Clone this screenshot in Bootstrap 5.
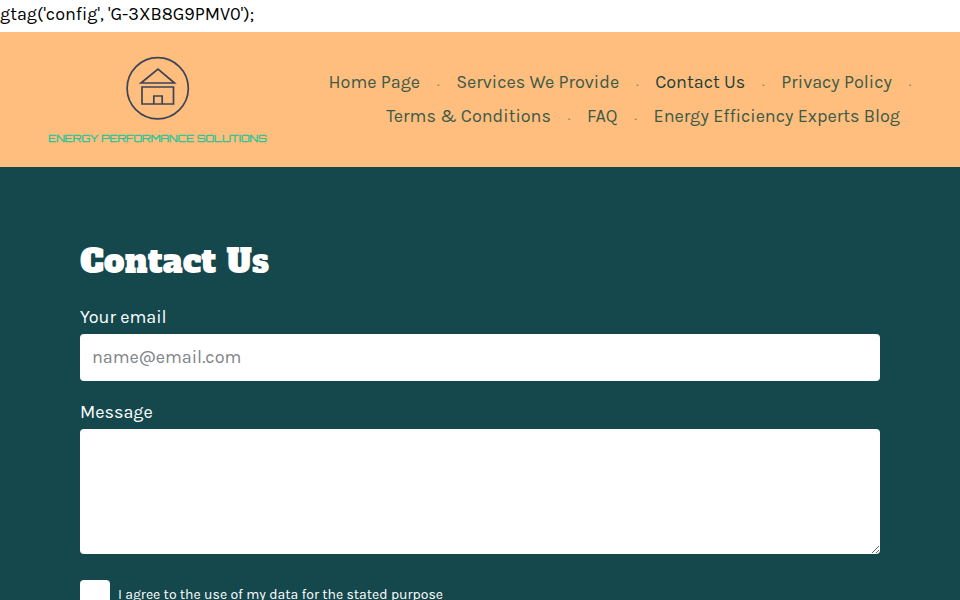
<!DOCTYPE html>
<html lang="en"><head><meta charset="utf-8">
<link href="https://cdn.jsdelivr.net/npm/bootstrap@5.3.0/dist/css/bootstrap.min.css" rel="stylesheet">
<style>
html,body{overflow:hidden;height:600px}
body{font-family:"Karla","Liberation Sans",sans-serif;font-size:18px;background:#fff;color:#000}
.rawline{height:32px;line-height:28px}
.topband{background:#ffbe7d;height:135px}
.logobox{width:315px;flex:none;padding-top:23px}
.logoname{font-family:"Orbitron","Michroma","DejaVu Sans",sans-serif;font-size:10.4px;color:#27c49a;line-height:1;white-space:nowrap;margin-top:12px;-webkit-text-stroke:.35px #27c49a}
.menuwrap{padding-bottom:2px}
.menurow{height:34px}
.rowone{padding-right:32px}
.rowtwo{padding-right:60px}
.menurow a{font-size:18px;color:#3c5a48;text-decoration:none;line-height:34px}
.menurow a.cur{color:#1f3f3a}
.sepdot{color:#5e8a5c;font-size:14px;margin:0 16.8px;line-height:34px;padding-top:3px}
.mainband{background:#14484c;color:#fff;padding:70px 80px 0}
.pagehead{font-family:"Alfa Slab One","DejaVu Serif",serif;font-weight:400;font-size:33px;line-height:50px;margin-bottom:18px}
.fieldlabel{font-size:18px;line-height:25px;margin-bottom:4px}
.formfield{height:47px;border:0;border-radius:4px;font-family:"Karla","Liberation Sans",sans-serif;font-size:18px;padding:6px 12px 8px;margin-bottom:19px}
.formfield::placeholder{color:#808488}
.areafield{height:125px;margin-bottom:26px}
.tick{width:30px;height:30px;background:#fff;border-radius:4px;flex:none}
.agree{font-size:14px;line-height:20px}
</style></head><body>
<div class="rawline">gtag('config', 'G-3XB8G9PMV0');</div>
<div class="topband d-flex">
<div class="logobox d-flex flex-column align-items-center">
<svg width="66" height="66" viewBox="0 0 66 66" fill="none" stroke="#3b4458" stroke-width="1.7"><circle cx="32.7" cy="33.2" r="30.6"/><path d="M16 28 33 14l16.5 14z"/><path d="M17 32h31.5v17H17zM28.8 49v-8h8.4v8"/></svg>
<div class="logoname">ENERGY PERFORMANCE SOLUTIONS</div>
</div>
<div class="menuwrap flex-grow-1 d-flex flex-column justify-content-center">
<div class="menurow rowone d-flex justify-content-end"><a href="#">Home Page</a><span class="sepdot">·</span><a href="#">Services We Provide</a><span class="sepdot">·</span><a href="#" class="cur">Contact Us</a><span class="sepdot">·</span><a href="#">Privacy Policy</a><span class="sepdot">·</span></div>
<div class="menurow rowtwo d-flex justify-content-end"><a href="#">Terms &amp; Conditions</a><span class="sepdot">·</span><a href="#">FAQ</a><span class="sepdot">·</span><a href="#">Energy Efficiency Experts Blog</a></div>
</div>
</div>
<main class="mainband">
<h1 class="pagehead">Contact Us</h1>
<label class="fieldlabel d-block">Your email</label>
<input class="form-control formfield" placeholder="name@email.com">
<label class="fieldlabel d-block">Message</label>
<textarea class="form-control formfield areafield"></textarea>
<div class="d-flex align-items-center gap-2"><span class="tick"></span><span class="agree">I agree to the use of my data for the stated purpose</span></div>
</main>
</body></html>
